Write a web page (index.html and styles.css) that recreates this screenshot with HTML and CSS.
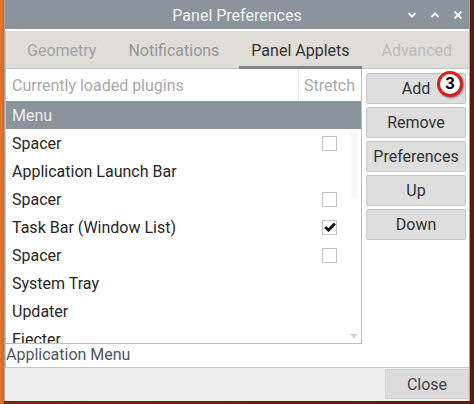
FILE: index.html
```html
<!DOCTYPE html>
<html lang="en">
<head>
    <meta charset="UTF-8">
    <title>Panel Preferences</title>
    <link rel="stylesheet" href="styles.css">
</head>
<body>
    <div class="window">
        <div class="titlebar">
            <span class="title">Panel Preferences</span>
            <div class="wm-buttons">
                <svg width="10" height="8" viewBox="0 0 10 8"><path d="M1.5 2 L5 5.5 L8.5 2" fill="none" stroke="#f2f2f2" stroke-width="2"/></svg>
                <svg width="10" height="8" viewBox="0 0 10 8"><path d="M1.5 6 L5 2.5 L8.5 6" fill="none" stroke="#f2f2f2" stroke-width="2"/></svg>
                <svg width="10" height="10" viewBox="0 0 10 10"><path d="M1.5 1.5 L8.5 8.5 M8.5 1.5 L1.5 8.5" fill="none" stroke="#f2f2f2" stroke-width="2"/></svg>
            </div>
        </div>

        <div class="body">
            <div class="notebook">
                <div class="tabs">
                    <div class="tab disabled">Geometry</div>
                    <div class="tab dim">Notifications</div>
                    <div class="tab active">Panel Applets</div>
                    <div class="tab disabled faint">Advanced</div>
                </div>

                <div class="page">
                    <div class="applets">
                        <div class="plugin-list">
                            <div class="list-head">
                                <span class="col-name">Currently loaded plugins</span>
                                <span class="col-stretch">Stretch</span>
                            </div>
                            <div class="rows">
                                <div class="row selected"><span class="name">Menu</span></div>
                                <div class="row"><span class="name">Spacer</span><span class="check"></span></div>
                                <div class="row"><span class="name">Application Launch Bar</span></div>
                                <div class="row"><span class="name">Spacer</span><span class="check"></span></div>
                                <div class="row"><span class="name">Task Bar (Window List)</span><span class="check on"><svg width="12" height="10" viewBox="0 0 12 10"><path d="M1.2 5 L4.5 8.2 L10.8 1.5" fill="none" stroke="#111" stroke-width="2.8"/></svg></span></div>
                                <div class="row"><span class="name">Spacer</span><span class="check"></span></div>
                                <div class="row"><span class="name">System Tray</span></div>
                                <div class="row"><span class="name">Updater</span></div>
                                <div class="row"><span class="name">Ejecter</span></div>
                            </div>
                            <div class="scroll-thumb"></div>
                            <div class="scroll-arrow"></div>
                        </div>

                        <div class="actions">
                            <button class="btn add">Add<span class="badge">3</span></button>
                            <button class="btn">Remove</button>
                            <button class="btn">Preferences</button>
                            <button class="btn">Up</button>
                            <button class="btn">Down</button>
                        </div>
                    </div>
                    <div class="status">Application Menu</div>
                </div>
            </div>

            <div class="dialog-buttons">
                <button class="btn close">Close</button>
            </div>
        </div>
    </div>
</body>
</html>
```

FILE: styles.css
```css
* {
    box-sizing: border-box;
}

body {
    margin: 0;
    width: 474px;
    height: 404px;
    overflow: hidden;
    font-family: Roboto, "Liberation Sans", sans-serif;
    font-size: 16px;
    background: linear-gradient(to right, #e27a2c 0, #d8642a 4px, #7a2418 4px, #5a1a12 100%);
}

.window {
    width: 466px;
    height: 401px;
    margin-left: 4px;
    display: flex;
    flex-direction: column;
    background: #ffffff;
    border-left: 1px solid #a4a4a4;
    border-right: 1px solid #a4a4a4;
    border-bottom: 1px solid #a4a4a4;
}

.titlebar {
    position: relative;
    height: 29px;
    flex: none;
    display: flex;
    align-items: center;
    justify-content: center;
    background: #8a949a;
    color: #f2f2f2;
}

.title {
    padding-top: 2px;
}

.wm-buttons {
    position: absolute;
    right: 6px;
    top: 10px;
    display: flex;
    align-items: center;
    gap: 13px;
}

.body {
    flex: 1;
    display: flex;
    flex-direction: column;
    padding-top: 2px;
}

.notebook {
    flex: 1;
    display: flex;
    flex-direction: column;
    border-left: 1px solid #c6c6c6;
}

.tabs {
    height: 38px;
    flex: none;
    display: flex;
    padding-left: 5px;
    background: #e0ddd9;
    border-bottom: 1px solid #c4c4c4;
}

.tab {
    position: relative;
    display: flex;
    align-items: center;
    padding: 2px 16px 0;
    color: #333333;
}

.tab.disabled {
    color: #a2a2a2;
}

.tab.dim {
    color: #959595;
}

.tab.faint {
    color: #bbbbbb;
}

.tab.active::after {
    content: "";
    position: absolute;
    left: 4px;
    right: 4px;
    bottom: -1px;
    height: 3px;
    background: #7c878d;
}

.page {
    flex: 1;
    display: flex;
    flex-direction: column;
}

.applets {
    display: flex;
    gap: 4px;
}

.plugin-list {
    position: relative;
    width: 356px;
    height: 275px;
    overflow: hidden;
    border-right: 1px solid #bdbdbd;
    border-bottom: 1px solid #bdbdbd;
}

.list-head {
    height: 32px;
    display: flex;
    color: #a8a8a8;
}

.col-name {
    flex: 1;
    padding: 7px 6px 0;
}

.col-stretch {
    width: 63px;
    padding: 7px 6px 0 0;
    text-align: right;
    border-left: 1px solid #ececec;
}

.row {
    height: 28px;
    display: flex;
    align-items: center;
    color: #262626;
}

.row .name {
    flex: 1;
    padding-left: 6px;
}

.row.selected {
    background: #8a949a;
    color: #eeeeee;
}

.check {
    width: 15px;
    height: 15px;
    margin-right: 24px;
    display: flex;
    align-items: center;
    justify-content: center;
    border: 1px solid #c2c2c2;
    background: #ffffff;
}

.scroll-thumb {
    position: absolute;
    right: 3px;
    top: 62px;
    width: 7px;
    height: 68px;
    background: #f8f8f8;
}

.scroll-arrow {
    position: absolute;
    right: 3px;
    bottom: 5px;
    width: 0;
    height: 0;
    border-left: 4px solid transparent;
    border-right: 4px solid transparent;
    border-top: 4px solid #d2d2d2;
}

.actions {
    width: 100px;
    padding-top: 4px;
    display: flex;
    flex-direction: column;
    gap: 3px;
}

.btn {
    position: relative;
    height: 31px;
    font-family: inherit;
    font-size: 16px;
    color: #333333;
    background: #dedede;
    border: 1px solid #c6c6c6;
    border-radius: 2px;
    padding: 0;
}

.badge {
    position: absolute;
    left: 70px;
    top: -3px;
    width: 26px;
    height: 26px;
    display: flex;
    align-items: center;
    justify-content: center;
    border-radius: 50%;
    background: #ffffff;
    border: 3px solid #d6201c;
    box-shadow: 1px 1px 2px rgba(0, 0, 0, 0.45);
    color: #000000;
    font-family: "Liberation Sans", sans-serif;
    font-weight: bold;
    font-size: 17px;
}

.status {
    height: 23px;
    padding-top: 1px;
    color: #4e5660;
}

.dialog-buttons {
    height: 34px;
    flex: none;
    display: flex;
    justify-content: flex-end;
    padding: 1px 0 3px;
    background: #eeeeee;
    border-top: 1px solid #c4c4c4;
}

.close {
    width: 84px;
    height: 30px;
    border-radius: 0;
    border-color: #d0d0d0;
    background: #dcdcdc;
    color: #444444;
}
```
